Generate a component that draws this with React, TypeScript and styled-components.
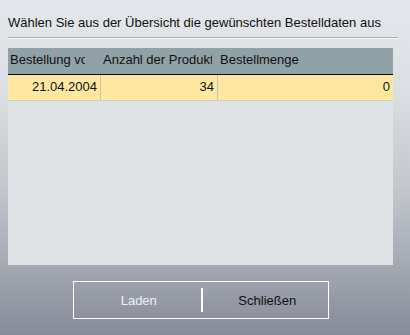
import React from "react";
import styled, { createGlobalStyle } from "styled-components";

const Global = createGlobalStyle`
  html, body { margin: 0; padding: 0; }
  body {
    width: 410px;
    height: 335px;
    overflow: hidden;
    font-family: "Liberation Sans", Arial, sans-serif;
    font-size: 13px;
  }
`;

const Window = styled.div`
  width: 410px;
  height: 335px;
  box-sizing: border-box;
  padding: 15px 8px 0 8px;
  background: linear-gradient(
    to bottom,
    #e3e6ea 0%,
    #dcdfe3 25%,
    #c4c8ce 55%,
    #a6aab4 78%,
    #878b98 100%
  );
  display: flex;
  flex-direction: column;
`;

const Title = styled.div`
  line-height: 16px;
  color: #101010;
  height: 16px;
  white-space: nowrap;
`;

const Separator = styled.div`
  margin-top: 6px;
  width: 390px;
  height: 0;
  border-top: 1px solid #a9adb2;
  border-bottom: 1px solid #f6f7f8;
`;

const Grid = styled.div`
  margin-top: 9px;
  width: 385px;
  height: 217px;
  background: #dfe3e6;
  display: flex;
  flex-direction: column;
`;

const HeaderRow = styled.div`
  display: grid;
  grid-template-columns: 93px 117px 175px;
  height: 26px;
  background: #91a1a8;
  border-bottom: 1px solid #101010;
`;

const HeaderCell = styled.div<{ $clip: number }>`
  line-height: 16px;
  padding: 4px 0 0 2px;
  color: #101010;
  white-space: nowrap;
  overflow: hidden;
  max-width: ${(p) => p.$clip}px;
`;

const DataRow = styled.div`
  display: grid;
  grid-template-columns: 93px 117px 175px;
  height: 25px;
  background: #fee8a0;
  border-bottom: 1px solid #cfcdc0;
`;

const DataCell = styled.div<{ $last?: boolean }>`
  line-height: 16px;
  padding: 4px 3px 0 0;
  text-align: right;
  color: #101010;
  border-right: ${(p) => (p.$last ? "none" : "1px solid #c9c6b4")};
  white-space: nowrap;
  overflow: hidden;
`;

const ButtonBar = styled.div`
  margin: 16px 0 0 65px;
  width: 254px;
  height: 36px;
  border: 1px solid #ffffff;
  display: flex;
  align-items: center;
`;

const Button = styled.div<{ $disabled?: boolean }>`
  flex: 1;
  text-align: center;
  line-height: 16px;
  padding: 2px 0 0 4px;
  color: ${(p) => (p.$disabled ? "#eef0f4" : "#101010")};
`;

const Divider = styled.div`
  width: 2px;
  height: 24px;
  background: #ffffff;
  margin-left: 1px;
`;

export default function App() {
  return (
    <>
      <Global />
      <Window>
        <Title>Wählen Sie aus der Übersicht die gewünschten Bestelldaten aus</Title>
        <Separator />
        <Grid>
          <HeaderRow>
            <HeaderCell $clip={75}>Bestellung vom</HeaderCell>
            <HeaderCell $clip={109}>Anzahl der Produkte</HeaderCell>
            <HeaderCell $clip={170}>Bestellmenge</HeaderCell>
          </HeaderRow>
          <DataRow>
            <DataCell>21.04.2004</DataCell>
            <DataCell>34</DataCell>
            <DataCell $last>0</DataCell>
          </DataRow>
        </Grid>
        <ButtonBar>
          <Button $disabled>Laden</Button>
          <Divider />
          <Button>Schließen</Button>
        </ButtonBar>
      </Window>
    </>
  );
}
